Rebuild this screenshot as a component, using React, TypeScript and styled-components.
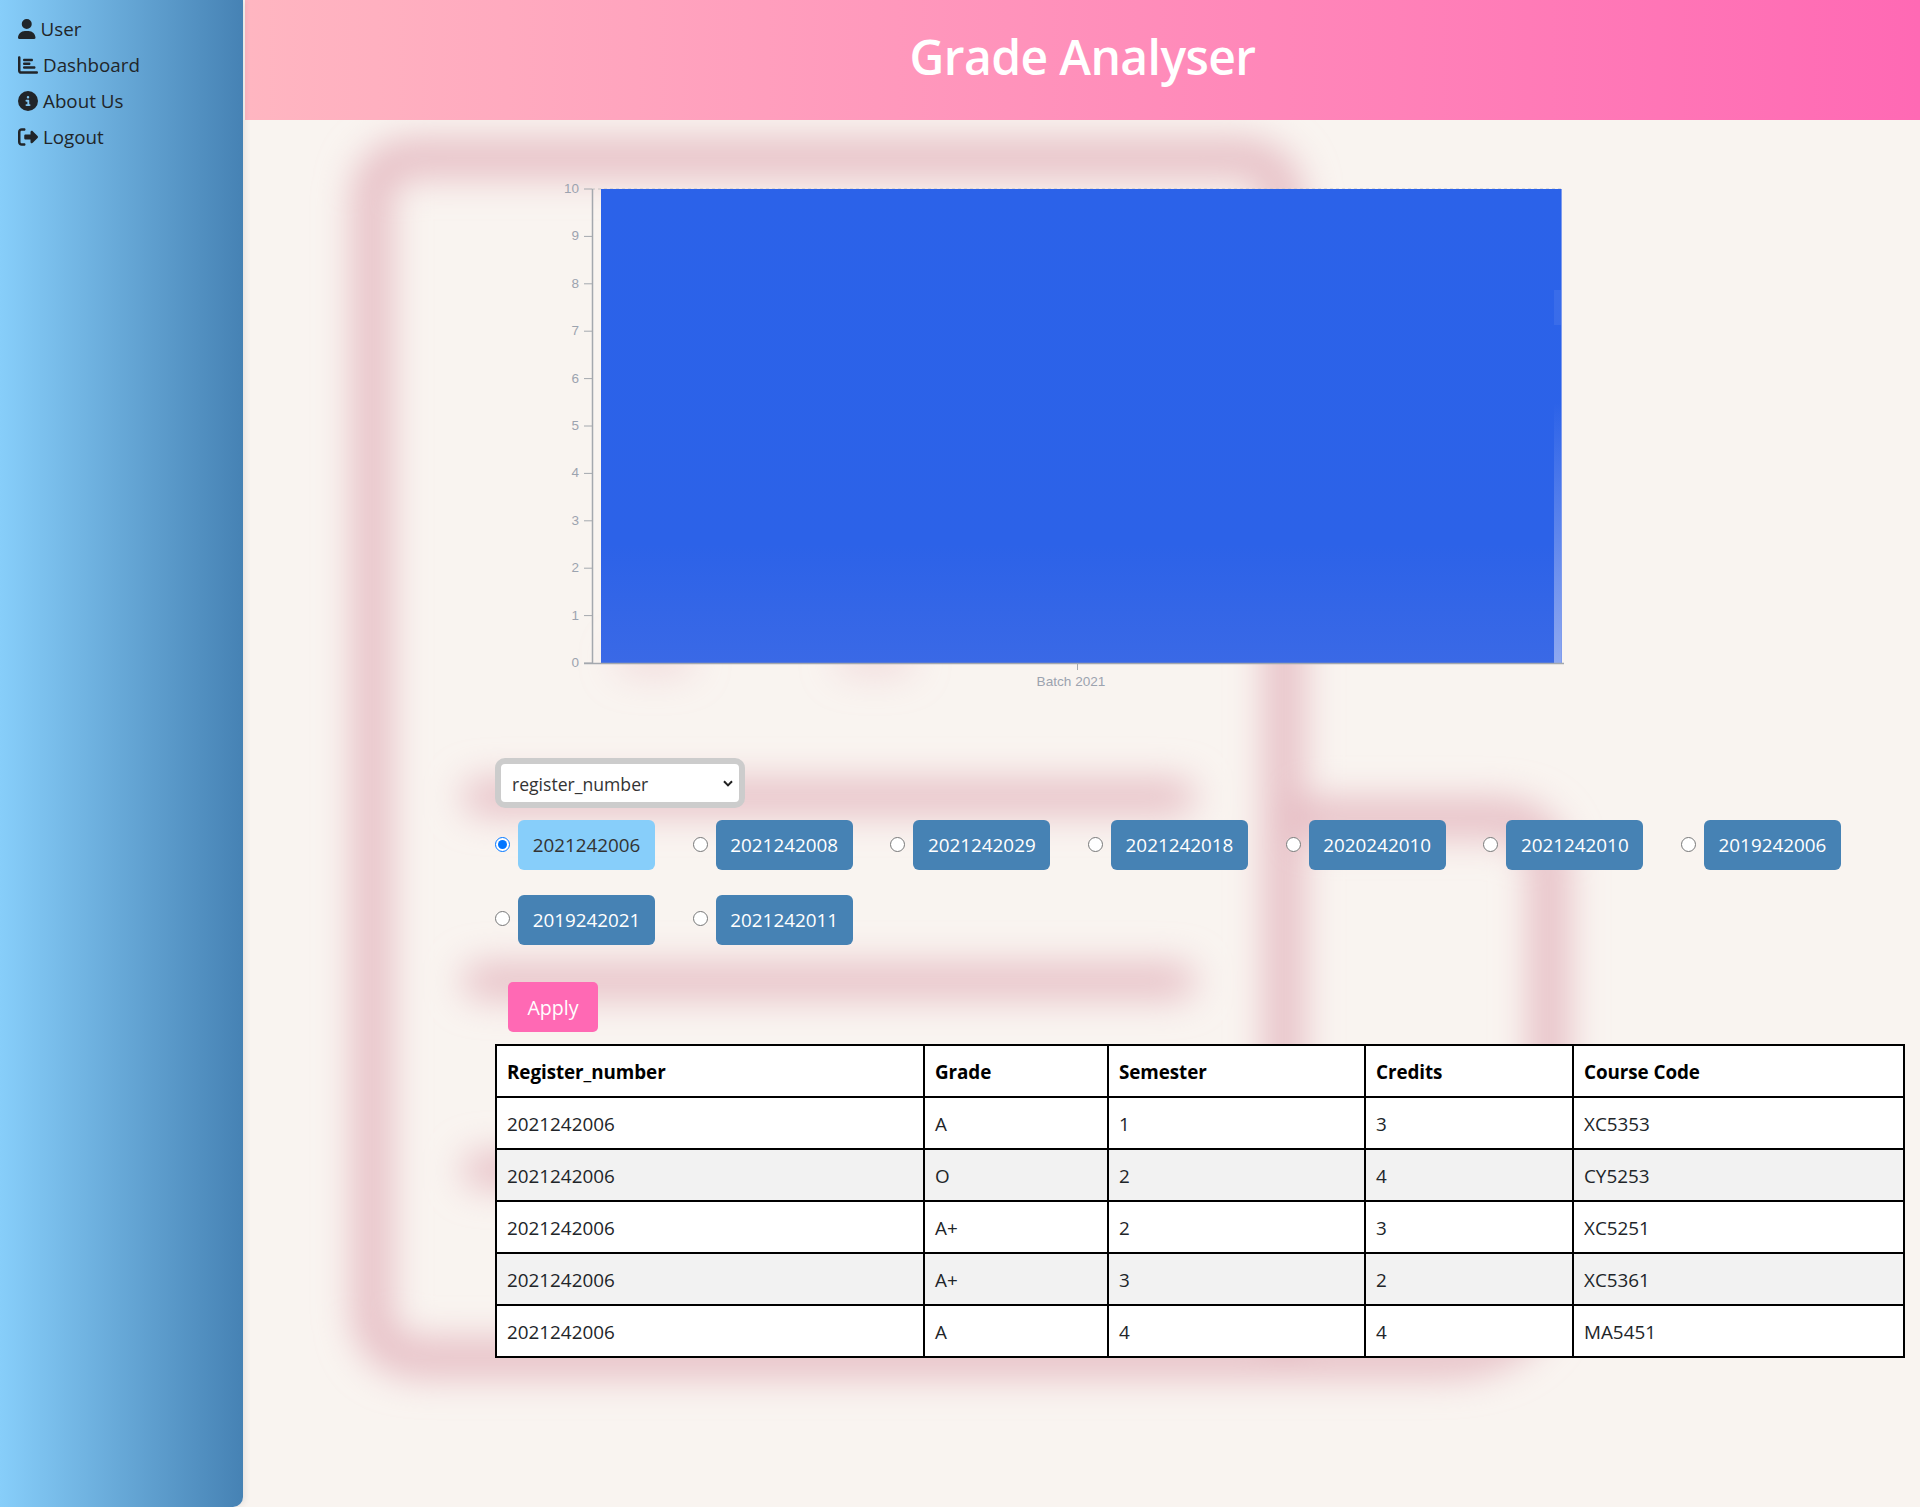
import React from "react";
import styled, { createGlobalStyle } from "styled-components";
import { FaUser, FaChartBar, FaCircleInfo, FaRightFromBracket } from "react-icons/fa6";

const FONT = `"Open Sans", "Noto Sans", Arial, sans-serif`;

const CHEVRON = `url("data:image/svg+xml,%3Csvg xmlns='http://www.w3.org/2000/svg' width='10' height='7' viewBox='0 0 10 7'%3E%3Cpath d='M1 1.2 5 5.4 9 1.2' fill='none' stroke='%23222' stroke-width='2'/%3E%3C/svg%3E")`;

const Global = createGlobalStyle`
  html, body { margin: 0; padding: 0; }
  body {
    background: #f9f4f0;
    font-family: ${FONT};
    font-size: 19px;
    color: #212529;
  }
`;

const Shell = styled.div`
  position: relative;
  display: flex;
  width: 1920px;
  height: 1507px;
  overflow: hidden;
`;

const Sidebar = styled.nav`
  flex: 0 0 243px;
  box-sizing: border-box;
  height: 1507px;
  margin-right: 2px;
  padding: 11px 18px;
  display: flex;
  flex-direction: column;
  background: linear-gradient(to right, #87cefa, #4682b4);
  border-bottom-right-radius: 10px;
  box-shadow: 2px 0 6px rgba(0, 0, 0, 0.08);
  position: relative;
  z-index: 2;
`;

const NavItem = styled.a<{ $iconWidth?: number }>`
  display: flex;
  align-items: center;
  gap: 5px;
  height: 36px;
  font-size: 18.8px;
  color: #212529;
  text-decoration: none;
  svg {
    width: ${(p) => p.$iconWidth ?? 20}px;
    height: 20px;
    flex: none;
  }
`;

const Main = styled.main`
  flex: 1;
  min-width: 0;
  position: relative;
`;

const Backdrop = styled.svg`
  position: absolute;
  left: 0;
  top: 0;
  width: 1675px;
  height: 1507px;
`;

const Header = styled.header`
  position: relative;
  box-sizing: border-box;
  height: 120px;
  padding-bottom: 8px;
  display: flex;
  align-items: center;
  justify-content: center;
  background: linear-gradient(to right, #ffb6c1, #ff69b4);
`;

const Title = styled.h1`
  margin: 0;
  font-size: 48px;
  font-weight: 600;
  letter-spacing: -0.6px;
  color: #fff;
`;

const Content = styled.div`
  position: relative;
  padding: 50px 16px 0 250px;
`;

const Chart = styled.svg`
  display: block;
  width: 1060px;
  height: 538px;
  margin-left: 45px;
  font-family: "Liberation Sans", Arial, sans-serif;
`;

const SelectFrame = styled.select`
  display: block;
  box-sizing: border-box;
  width: 250px;
  height: 50px;
  margin: 50px 0 12px;
  padding: 1px 5px 0 11px;
  appearance: none;
  background: #fff ${CHEVRON} no-repeat right 6px center;
  border: 6px solid #ccc;
  border-radius: 10px;
  font-family: ${FONT};
  font-size: 17.6px;
  color: #333;
  outline: none;
`;

const RadioGrid = styled.div`
  display: flex;
  flex-wrap: wrap;
  column-gap: 37.67px;
  row-gap: 24.5px;
`;

const RadioItem = styled.label`
  display: flex;
  align-items: center;
  gap: 8px;
  height: 50px;
`;

const RadioInput = styled.input`
  width: 15px;
  height: 15px;
  margin: 0 0 2px;
`;

const RegButton = styled.span<{ $active?: boolean }>`
  display: flex;
  align-items: center;
  justify-content: center;
  box-sizing: border-box;
  width: 137px;
  height: 50px;
  border-radius: 6px;
  background: ${(p) => (p.$active ? "#87cefa" : "#4682b4")};
  color: ${(p) => (p.$active ? "#333" : "#fff")};
  font-size: 18.85px;
`;

const ApplyButton = styled.button`
  display: block;
  width: 90px;
  height: 50px;
  margin: 37.5px 0 12px 13px;
  padding: 0;
  border: none;
  border-radius: 5px;
  background: #ff69b4;
  color: #fff;
  font-family: ${FONT};
  font-size: 19.6px;
`;

const Grades = styled.table`
  width: 1408px;
  table-layout: fixed;
  border-collapse: collapse;
  background: #fff;
  color: #212529;
`;

const Row = styled.tr<{ $shade?: boolean }>`
  height: 52px;
  background: ${(p) => (p.$shade ? "#f2f2f2" : "#fff")};
`;

const HeadCell = styled.th<{ $w: number }>`
  width: ${(p) => p.$w}px;
  box-sizing: border-box;
  padding: 1px 10px 0;
  border: 2px solid #000;
  text-align: left;
  font-size: 18.85px;
  font-weight: 700;
  letter-spacing: -0.08px;
  color: #000;
`;

const Cell = styled.td`
  padding: 1px 10px 0;
  border: 2px solid #000;
  font-size: 18.85px;
`;

const registers = [
  "2021242006", "2021242008", "2021242029", "2021242018", "2020242010",
  "2021242010", "2019242006", "2019242021", "2021242011",
];

const columns: [string, number][] = [
  ["Register_number", 428], ["Grade", 184], ["Semester", 257], ["Credits", 208], ["Course Code", 331],
];

const rows = [
  ["2021242006", "A", "1", "3", "XC5353"],
  ["2021242006", "O", "2", "4", "CY5253"],
  ["2021242006", "A+", "2", "3", "XC5251"],
  ["2021242006", "A+", "3", "2", "XC5361"],
  ["2021242006", "A", "4", "4", "MA5451"],
];

const BackdropArt = () => (
  <Backdrop viewBox="245 0 1675 1507" aria-hidden="true">
    <defs>
      <filter id="soft" x="-20%" y="-20%" width="140%" height="140%">
        <feGaussianBlur stdDeviation="18" />
      </filter>
    </defs>
    <g filter="url(#soft)" fill="none" stroke="#e6bdc4" strokeLinecap="round">
      <path strokeWidth="38" d="M1284 1340 V205 Q1284 158 1238 158 H415 Q372 158 372 200 V1310 Q372 1358 425 1358 H1440 Q1549 1358 1549 1250 V872 Q1549 818 1495 818 H1284" />
      <path strokeWidth="34" d="M480 797 H1178" />
      <path strokeWidth="34" d="M480 981 H1178" />
      <path strokeWidth="34" d="M480 1170 H700" />
      <path strokeWidth="30" strokeOpacity="0.45" d="M630 660 H680 M850 660 H900" />
    </g>
  </Backdrop>
);

const ticks = Array.from({ length: 11 }, (_, i) => i);

/* Chart coordinates are page x − 540, page y − 170 */
const GradeChart = () => (
  <Chart viewBox="0 0 1060 538">
    <defs>
      <linearGradient id="bar" x1="0" y1="0" x2="0" y2="1">
        <stop offset="0" stopColor="#2b62e9" />
        <stop offset="0.75" stopColor="#2c62e8" />
        <stop offset="1" stopColor="#3a69e6" />
      </linearGradient>
      <linearGradient id="strip" x1="0" y1="0" x2="0" y2="1">
        <stop offset="0" stopColor="#8ea8f0" stopOpacity="0" />
        <stop offset="1" stopColor="#8ea8f0" />
      </linearGradient>
    </defs>
    <line x1="52" y1="19" x2="1024" y2="19" stroke="#c4c4c4" strokeDasharray="3 3" />
    <rect x="61" y="19" width="961" height="474" fill="url(#bar)" />
    <rect x="1014" y="233" width="8" height="260" fill="url(#strip)" />
    <rect x="1014" y="120" width="8" height="35" fill="#8ea8f0" fillOpacity="0.15" />
    <rect x="1021" y="19" width="1" height="474" fill="#7f9bee" />
    <line x1="52.5" y1="19" x2="52.5" y2="493" stroke="#a4a8ae" strokeWidth="1.5" />
    <line x1="44" y1="493.5" x2="1024" y2="493.5" stroke="#a4a8ae" strokeWidth="1.5" />
    <line x1="537.5" y1="493" x2="537.5" y2="500" stroke="#a4a8ae" />
    {ticks.map((t) => {
      const y = 493 - t * 47.4;
      return (
        <g key={t}>
          <line x1="44" x2="52" y1={y} y2={y} stroke="#a4a8ae" />
          <text x="39" y={y + 4} fontSize="13.5" textAnchor="end" fill="#9ca3af">{t}</text>
        </g>
      );
    })}
    <text x="531" y="516" fontSize="13.6" textAnchor="middle" fill="#9ca3af">Batch 2021</text>
  </Chart>
);

export default function App() {
  return (
    <>
      <Global />
      <Shell>
        <Sidebar>
          <NavItem href="#" $iconWidth={17.5}><FaUser />User</NavItem>
          <NavItem href="#"><FaChartBar />Dashboard</NavItem>
          <NavItem href="#"><FaCircleInfo />About Us</NavItem>
          <NavItem href="#"><FaRightFromBracket />Logout</NavItem>
        </Sidebar>
        <Main>
          <BackdropArt />
          <Header><Title>Grade Analyser</Title></Header>
          <Content>
            <GradeChart />
            <SelectFrame defaultValue="register_number">
              <option value="register_number">register_number</option>
            </SelectFrame>
            <RadioGrid>
              {registers.map((r, i) => (
                <RadioItem key={r}>
                  <RadioInput type="radio" name="reg" defaultChecked={i === 0} />
                  <RegButton $active={i === 0}>{r}</RegButton>
                </RadioItem>
              ))}
            </RadioGrid>
            <ApplyButton type="button">Apply</ApplyButton>
            <Grades>
              <thead>
                <Row>
                  {columns.map(([label, w]) => (
                    <HeadCell key={label} $w={w}>{label}</HeadCell>
                  ))}
                </Row>
              </thead>
              <tbody>
                {rows.map((row, i) => (
                  <Row key={i} $shade={i % 2 === 1}>
                    {row.map((c, j) => <Cell key={j}>{c}</Cell>)}
                  </Row>
                ))}
              </tbody>
            </Grades>
          </Content>
        </Main>
      </Shell>
    </>
  );
}
